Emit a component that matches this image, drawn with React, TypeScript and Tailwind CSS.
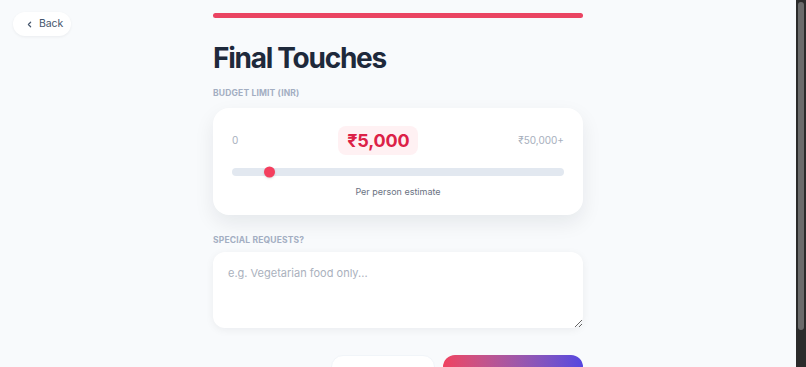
import React, { useState } from 'react';

const App: React.FC = () => {
  const [budget] = useState(5000);
  const max = 50000;
  const pct = budget / max;

  return (
    <div className="flex h-screen bg-[#f8fafc]" style={{ fontFamily: 'Inter, "Noto Sans", sans-serif' }}>
      <div className="relative flex-1 overflow-hidden">
        {/* back button */}
        <button className="absolute top-3 left-[13px] flex items-center gap-[5px] h-6 pl-[12px] pr-[8px] rounded-full bg-white shadow-[0_1px_3px_rgba(15,23,42,0.06)] text-[10.5px] tracking-[-0.01em] text-slate-600">
          <svg width="9" height="9" viewBox="0 0 24 24" fill="none" stroke="currentColor" strokeWidth="3.2" strokeLinecap="round" strokeLinejoin="round">
            <path d="M15 18l-6-6 6-6" />
          </svg>
          Back
        </button>

        <div className="w-[370px] mx-auto pt-[13px] pb-[10px]">
          <div className="h-[5px] rounded-full bg-[#ea4462]" />

          <h1 className="mt-[22px] text-[28px] leading-9 font-bold tracking-[-0.045em] text-[#1e293b]">Final Touches</h1>

          <p className="mt-[11px] text-[8.5px] font-bold uppercase tracking-[0.02em] text-[#a3aec2]">Budget Limit (INR)</p>

          <div className="mt-[8px] bg-white rounded-2xl shadow-[0_8px_20px_rgba(15,23,42,0.08)] px-[19px] pt-[18px] pb-[17px]">
            <div className="flex items-center justify-between">
              <span className="text-[10px] text-[#a7afbd]">0</span>
              <span className="px-[9px] h-[29px] flex items-center rounded-lg bg-[#fff1f3] text-[18px] font-bold tracking-[-0.01em] text-[#dc2147]">₹5,000</span>
              <span className="text-[10px] text-[#a7afbd]">₹50,000+</span>
            </div>
            <div className="relative mt-[13px] h-2 rounded-full bg-[#e2e8f0]">
              <div
                className="absolute top-1/2 w-[11px] h-[11px] -translate-y-1/2 rounded-full bg-[#f43f5e] shadow-sm"
                style={{ left: `calc(${pct * 100}% - ${pct * 11}px)` }}
              />
            </div>
            <p className="mt-[9px] text-center text-[9px] text-gray-500">Per person estimate</p>
          </div>

          <p className="mt-[19px] text-[8.5px] font-bold uppercase tracking-[0.02em] text-[#a3aec2]">Special Requests?</p>

          <textarea
            placeholder="e.g. Vegetarian food only..."
            className="mt-[5px] block w-full h-[76px] rounded-xl bg-white shadow-[0_2px_8px_rgba(15,23,42,0.06)] px-[15px] pt-[13px] text-[11px] text-slate-700 placeholder:text-[#aab1bd] outline-none"
          />

          <div className="mt-[27px] flex justify-end gap-2">
            <button className="w-[104px] h-[40px] rounded-xl bg-white border border-slate-100 text-[12px] font-semibold text-slate-500">
              Back
            </button>
            <button className="w-[140px] h-[40px] rounded-xl bg-gradient-to-r from-[#f0415f] to-[#5546e0] text-[12px] font-semibold text-white flex items-center justify-center gap-1">
              Plan My Trip
              <svg width="12" height="12" viewBox="0 0 24 24" fill="none" stroke="currentColor" strokeWidth="2.5" strokeLinecap="round" strokeLinejoin="round">
                <path d="M5 12h14M13 6l6 6-6 6" />
              </svg>
            </button>
          </div>
        </div>
      </div>

      {/* scrollbar */}
      <div className="w-[10px] bg-[#2b2b2b] px-[2px] pt-[2px]">
        <div className="h-[328px] rounded-full bg-[#6b6b6b]" />
      </div>
    </div>
  );
};

export default App;
